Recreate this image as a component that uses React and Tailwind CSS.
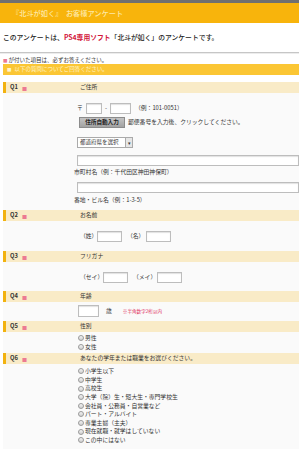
import React from "react";

const F = { fontFamily: '"Noto Sans CJK JP", "Noto Sans", sans-serif' };

function Box({ w, h = 11, full }) {
  return (
    <span
      className={`inline-block bg-white border border-[#bdbdbd] shadow-[inset_0_1px_1px_rgba(0,0,0,0.12)] ${full ? "flex-1" : ""}`}
      style={{ width: full ? undefined : w, height: h }}
    />
  );
}

function QRow({ n, label }) {
  return (
    <div className="flex items-center h-[11px] bg-[#f9ebc7] border-l-[3px] border-[#f2b20f] text-[#333]">
      <span className="pl-[4px] w-[74px] text-[5.8px] font-bold flex items-center">
        {n}
        <span className="ml-[4px] text-[#ec7a92] text-[5px]">■</span>
      </span>
      <span className="text-[5.8px]">{label}</span>
    </div>
  );
}

function Radio({ label }) {
  return (
    <div className="flex items-center h-[8.6px] text-[5.8px] text-[#333]">
      <span className="inline-block w-[6px] h-[6px] rounded-full border border-[#9a9a9a] bg-gradient-to-b from-[#f4f4f4] to-[#cfcfcf] mr-[1px]" />
      {label}
    </div>
  );
}

export default function App() {
  return (
    <div className="w-[299px] h-[449px] overflow-hidden bg-white" style={F}>
      <div className="h-[3px] bg-[#707070]" />
      <div className="h-[20px] bg-[#f8b40c] flex items-center pl-[12px] text-[7.2px] text-[#fde8a6] font-medium">
        『北斗が如く』　お客様アンケート
      </div>
      <div className="mt-[9px] h-[10px] pl-[3px] flex items-center text-[6.8px] font-medium text-[#222] whitespace-nowrap">
        このアンケートは、<span className="text-[#d2143a] font-bold">PS4専用ソフト</span>「北斗が如く」のアンケートです。
      </div>
      <div className="mt-[10px] h-[1px] bg-[#c6c6c6]" />
      <div className="h-[1px] bg-[#ececec]" />
      <div className="pl-[3px]">
        <div className="mt-[3px] h-[6px] flex items-center text-[5.5px] text-[#333] whitespace-nowrap">
          <span className="text-[#ec7a92] text-[4.5px] mr-[1px]">■</span>が付いた項目は、必ずお答えください。
        </div>
        <div className="mt-[1px] h-[11px] bg-[#fbc634] flex items-center pl-[4px] text-[5.5px] text-[#fff4cc] whitespace-nowrap">
          <span className="text-[4.5px] mr-[3px]">■</span>以下の質問についてご回答ください。
        </div>

        <div className="mt-[7px]">
          <QRow n="Q1" label="ご住所" />
          <div className="bg-[#fafafa] pl-[74px] pt-[10px] pb-[6px] text-[5.8px] text-[#333] whitespace-nowrap">
            <div className="flex items-center h-[11px]">
              <span className="w-[9px]">〒</span>
              <Box w={16} />
              <span className="w-[8px] text-center">-</span>
              <Box w={21} />
              <span className="ml-[4px]">（例：101-0051）</span>
            </div>
            <div className="flex items-center h-[11px] mt-[3px]">
              <span className="ml-[2px] h-[11px] w-[46px] flex items-center justify-center bg-gradient-to-b from-[#c4c4c4] to-[#a2a2a2] border border-[#8c8c8c] text-[#222] font-bold text-[5.6px]">
                住所自動入力
              </span>
              <span className="ml-[3px]">郵便番号を入力後、クリックしてください。</span>
            </div>
            <div className="flex items-center h-[11px] mt-[9px]">
              <span className="h-[11px] w-[56px] flex items-center bg-white border border-[#aaa] text-[5.5px]">
                <span className="pl-[2px] flex-1">都道府県を選択</span>
                <span className="h-full w-[7px] border-l border-[#aaa] bg-[#e6e6e6] flex items-center justify-center text-[5px]">▾</span>
              </span>
            </div>
            <div className="flex h-[11px] mt-[7px]">
              <Box full />
            </div>
            <div className="h-[8px] mt-[2px] flex items-center -ml-[3px]">市町村名（例：千代田区神田神保町）</div>
            <div className="flex h-[11px] mt-[6px]">
              <Box full />
            </div>
            <div className="h-[8px] mt-[3px] flex items-center -ml-[3px]">番地・ビル名（例：1-3-5）</div>
          </div>
        </div>

        <div>
          <QRow n="Q2" label="お名前" />
          <div className="bg-[#fafafa] pl-[77px] pt-[10px] pb-[9px] text-[5.8px] text-[#333] whitespace-nowrap">
            <div className="flex items-center h-[11px]">
              <span className="w-[17px]">（姓）</span>
              <Box w={25} />
              <span className="ml-[5px] w-[19px]">（名）</span>
              <Box w={25} />
            </div>
          </div>
        </div>

        <div>
          <QRow n="Q3" label="フリガナ" />
          <div className="bg-[#fafafa] pl-[77px] pt-[10px] pb-[8px] text-[5.8px] text-[#333] whitespace-nowrap">
            <div className="flex items-center h-[11px]">
              <span className="w-[23px]">（セイ）</span>
              <Box w={25} />
              <span className="ml-[5px] w-[24px]">（メイ）</span>
              <Box w={25} />
            </div>
          </div>
        </div>

        <div>
          <QRow n="Q4" label="年齢" />
          <div className="bg-[#fafafa] pl-[75px] pt-[3px] pb-[4px] text-[5.8px] text-[#333] whitespace-nowrap">
            <div className="flex items-center h-[12px]">
              <Box w={21} h={12} />
              <span className="ml-[7px]">歳</span>
              <span className="ml-[11px] text-[4.6px] text-[#e0305a]">※半角数字2桁以内</span>
            </div>
          </div>
        </div>

        <div>
          <QRow n="Q5" label="性別" />
          <div className="bg-[#fafafa] pl-[75px] pt-[2px] pb-[2px] whitespace-nowrap">
            <Radio label="男性" />
            <Radio label="女性" />
          </div>
        </div>

        <div>
          <QRow n="Q6" label="あなたの学年または職業をお選びください。" />
          <div className="bg-[#fafafa] pl-[75px] pt-[3px] pb-[4px] whitespace-nowrap">
            <Radio label="小学生以下" />
            <Radio label="中学生" />
            <Radio label="高校生" />
            <Radio label="大学（院）生・短大生・専門学校生" />
            <Radio label="会社員・公務員・自営業など" />
            <Radio label="パート・アルバイト" />
            <Radio label="専業主婦（主夫）" />
            <Radio label="現在就職・就学はしていない" />
            <Radio label="この中にはない" />
          </div>
        </div>
      </div>
    </div>
  );
}
